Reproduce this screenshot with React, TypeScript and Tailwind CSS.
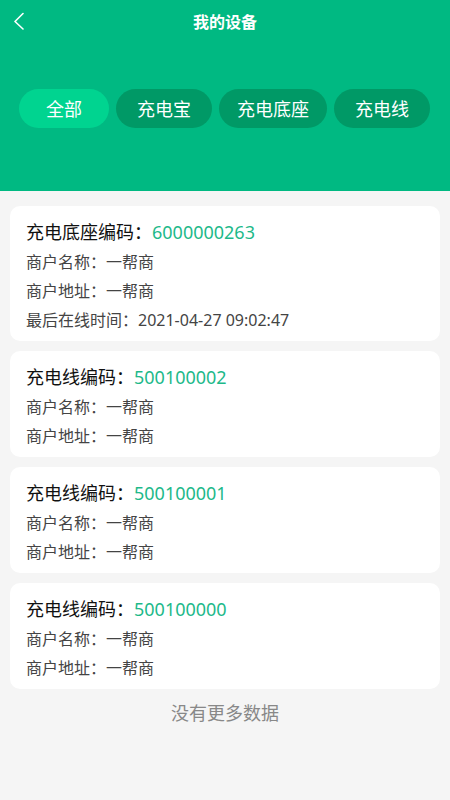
import React from "react";

const tabs = [
  { label: "全部", w: "w-[90px]", active: true },
  { label: "充电宝", w: "w-[96px]", active: false },
  { label: "充电底座", w: "w-[108px]", active: false },
  { label: "充电线", w: "w-[96px]", active: false },
];

type Device = { type: string; code: string; lastOnline?: string };

const devices: Device[] = [
  { type: "充电底座编码：", code: "6000000263", lastOnline: "2021-04-27 09:02:47" },
  { type: "充电线编码：", code: "500100002" },
  { type: "充电线编码：", code: "500100001" },
  { type: "充电线编码：", code: "500100000" },
];

export default function App() {
  return (
    <div
      className="min-h-[800px] w-[450px] bg-[#f5f5f5]"
      style={{ fontFamily: '"Noto Sans", "Noto Sans CJK SC", sans-serif' }}
    >
      <div className="h-[191px] bg-[#00b982] flex flex-col">
        <div className="relative h-[44px] flex items-center justify-center">
          <svg
            className="absolute left-[12px] top-[12px]"
            width="14"
            height="18"
            viewBox="0 0 14 18"
            fill="none"
          >
            <path d="M11 1.5 L3 9.5 L11 17" stroke="white" strokeWidth="1.6" strokeLinecap="round" strokeLinejoin="round" />
          </svg>
          <span className="text-white text-[16px] font-bold leading-none">我的设备</span>
        </div>
        <div className="mt-[45px] flex gap-[7px] pl-[19px]">
          {tabs.map((t) => (
            <div
              key={t.label}
              className={`${t.w} h-[39px] rounded-full flex items-center justify-center text-white text-[18px] leading-none ${
                t.active ? "bg-[#00d490]" : "bg-[#009966]"
              }`}
            >
              {t.label}
            </div>
          ))}
        </div>
      </div>
      <div className="flex flex-col gap-[10px] px-[10px] pt-[15px]">
        {devices.map((d) => (
          <div key={d.code} className="bg-white rounded-[10px] pt-[11px] pb-[7px] px-[16px]">
            <div className="h-[30px] flex items-center">
              <span className="text-[18px] text-[#111] leading-none">{d.type}</span>
              <span className="text-[18px] text-[#1db98a] leading-none">{d.code}</span>
            </div>
            <div className="h-[29px] flex items-center text-[16px] text-[#444] leading-none">商户名称：一帮商</div>
            <div className="h-[29px] flex items-center text-[16px] text-[#444] leading-none">商户地址：一帮商</div>
            {d.lastOnline && (
              <div className="h-[29px] flex items-center text-[16px] text-[#444] leading-none">
                最后在线时间：{d.lastOnline}
              </div>
            )}
          </div>
        ))}
      </div>
      <div className="mt-[15px] text-center text-[18px] text-[#888] leading-none">没有更多数据</div>
    </div>
  );
}
